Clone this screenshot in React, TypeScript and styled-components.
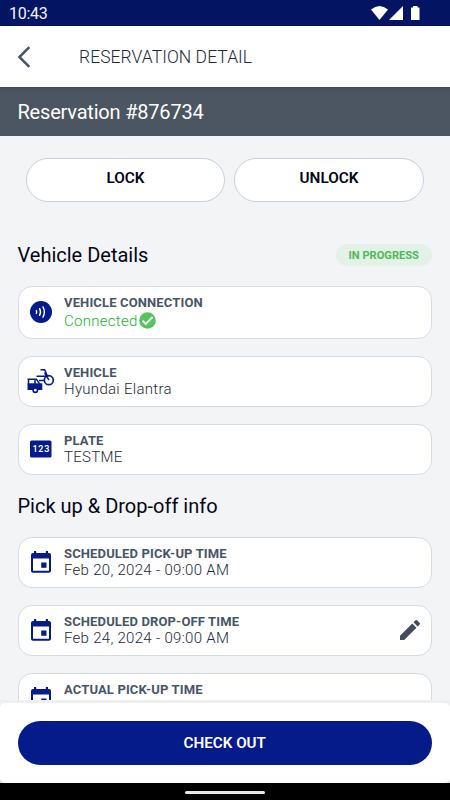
import React from "react";
import styled, { createGlobalStyle } from "styled-components";

const GlobalStyle = createGlobalStyle`
  * { box-sizing: border-box; }
  body { margin: 0; background: #f3f4f6; font-family: Roboto, "Liberation Sans", sans-serif; }
  button { font-family: inherit; }
  svg { display: block; flex: none; }
`;

const Screen = styled.div`
  width: 450px;
  height: 800px;
  display: flex;
  flex-direction: column;
  overflow: hidden;
  background: #f3f4f6;
`;

const StatusBar = styled.div`
  height: 26px;
  flex: none;
  display: flex;
  align-items: flex-start;
  justify-content: space-between;
  padding: 2px 29px 0 9px;
  background: #031463;
  color: #f1f3fb;
  font-size: 16px;
  line-height: 24px;
  letter-spacing: -0.25px;
`;

const StatusIconGroup = styled.div`
  padding-top: 3px;
`;

const Header = styled.header`
  height: 61px;
  flex: none;
  display: flex;
  align-items: center;
  gap: 48px;
  padding-left: 17px;
  background: #fff;
`;

const BackButton = styled.button`
  border: 0;
  padding: 0;
  background: none;
`;

const HeaderTitle = styled.h1`
  margin: 0;
  font-size: 17.5px;
  font-weight: 300;
  line-height: 22px;
  letter-spacing: 0.05px;
  color: #1e293b;
`;

const Banner = styled.div`
  height: 49px;
  flex: none;
  padding: 0 17.5px;
  border-top: 1px solid #414b57;
  background: linear-gradient(#47525e, #4b5662 8px);
  color: #fff;
  font-size: 20px;
  line-height: 49px;
  letter-spacing: -0.2px;
`;

const Content = styled.main`
  flex: 1;
  min-height: 0;
  overflow: hidden;
  padding: 22px 18px 0 17.5px;
`;

const LockActions = styled.div`
  display: grid;
  grid-template-columns: 199px 190px;
  gap: 9px;
  padding-left: 8.5px;
`;

const PillButton = styled.button`
  height: 44px;
  padding: 0 0 4px;
  border: 1px solid #c6d0de;
  border-radius: 22px;
  background: #fff;
  color: #020617;
  font-size: 15.3px;
  font-weight: 600;
`;

const SectionHead = styled.div<{ $top: number; $bottom: number }>`
  display: flex;
  align-items: center;
  justify-content: space-between;
  height: 22px;
  margin: ${(p) => p.$top}px 0 ${(p) => p.$bottom}px;
`;

const SectionTitle = styled.h2`
  margin: 0;
  font-size: 20px;
  font-weight: 400;
  line-height: 22px;
  color: #020617;
`;

const StatusBadge = styled.span`
  width: 96.5px;
  height: 22px;
  border-radius: 11px;
  background: #e4f1e8;
  color: #4cbb54;
  font-size: 11.1px;
  font-weight: 700;
  line-height: 23px;
  text-align: center;
`;

const CardList = styled.div`
  display: flex;
  flex-direction: column;
  gap: 17.5px;
`;

const Card = styled.section<{ $height?: number }>`
  display: flex;
  align-items: center;
  height: ${(p) => p.$height ?? 50.5}px;
  padding: 0 11px 0 8px;
  border: 1px solid #d5dce6;
  border-radius: 14px;
  background: #fff;
`;

const IconSlot = styled.div`
  width: 28px;
  margin-right: 9.5px;
  display: flex;
  justify-content: center;
`;

const CardText = styled.div`
  flex: 1;
  padding-top: 1px;
`;

const CardLabel = styled.div`
  font-size: 13px;
  font-weight: 700;
  line-height: 16px;
  letter-spacing: 0.14px;
  color: #475569;
`;

const CardValue = styled.div<{ $positive?: boolean }>`
  display: flex;
  align-items: center;
  gap: 1px;
  font-size: 15px;
  font-weight: 300;
  line-height: ${(p) => (p.$positive ? 20 : 17)}px;
  letter-spacing: 0.29px;
  color: ${(p) => (p.$positive ? "#22b530" : "#1e293b")};
`;

const EditButton = styled.button`
  border: 0;
  padding: 0;
  background: none;
`;

const FooterBackdrop = styled.div`
  flex: none;
  height: 83px;
  padding-top: 3px;
  background: linear-gradient(#efeff0 6px, #dedede);
`;

const Footer = styled.footer`
  height: 80px;
  padding: 18px 18px 0 17.5px;
  border-radius: 5px;
  background: #fff;
`;

const CheckOutButton = styled.button`
  display: block;
  width: 100%;
  height: 44px;
  padding: 0;
  border: 0;
  border-radius: 22px;
  background: #051b8a;
  color: #fff;
  font-size: 15.2px;
  font-weight: 600;
`;

const GestureBar = styled.div`
  flex: none;
  height: 17px;
  padding-top: 8px;
  background: #000;
`;

const GestureHandle = styled.div`
  width: 80px;
  height: 3px;
  margin: 0 auto;
  border-radius: 2px;
  background: #e8e8e8;
`;

const NAVY = "#051b8a";

const StatusIcons = () => (
  <svg width="50" height="16" viewBox="0 0 50 16" fill="#fff">
    <path d="M0 4.500Q8.500-2.500 17 4.500L8.500 15Z" />
    <path d="M32 1V15H18Z" />
    <path d="M40 2.500h2V1h4.500v1.500h2V15H40Z" />
  </svg>
);

const BackIcon = () => (
  <svg width="14" height="22" viewBox="0 0 14 22" fill="none" stroke="#475569" strokeWidth="2.500">
    <path d="M12.300 1.200 2.400 11l9.900 9.800" />
  </svg>
);

const ConnectionIcon = () => (
  <svg width="22" height="22" viewBox="0 0 22 22" fill="none" stroke="#fff" strokeWidth="1.400" strokeLinecap="round">
    <circle cx="11" cy="11" r="11" fill={NAVY} stroke="none" />
    <path d="M6.300 9.500q.8 1.500 0 3M9.600 7.700q1.800 3.300 0 6.600M13 5.900q2.700 5.100 0 10.200" />
  </svg>
);

const CheckIcon = () => (
  <svg width="17" height="17" viewBox="0 0 17 17" fill="none">
    <circle cx="8.500" cy="8.500" r="8.300" fill="#57c35e" />
    <path d="m3.500 8.700 3.300 3.200 6.800-6.900" stroke="#fff" strokeWidth="1.900" />
  </svg>
);

const VehicleIcon = () => (
  <svg width="28" height="26" viewBox="0 0 28 26" fill="none" stroke={NAVY}>
    <path d="M13.500 1.700h4.200l3.200 7.500M9.500 8.200h10l2.500 4M17.700 4.500l1.500 4" strokeWidth="1.500" />
    <circle cx="21.800" cy="12.200" r="4.500" strokeWidth="1.700" />
    <path d="M12 12.500h5.500" strokeWidth="1.500" />
    <path d="M.5 11.200h8.900l3.400 5M8 11.200v5M1.500 11.200v5" strokeWidth="1.500" />
    <path d="M.5 15.300h14.800v6.700H.5Z" fill={NAVY} stroke="none" />
    <circle cx="8.300" cy="22.200" r="2.200" fill="#fff" strokeWidth="1.600" />
  </svg>
);

const PlateIcon = () => (
  <svg width="22" height="18" viewBox="0 0 22 18">
    <rect y="0.500" width="21.500" height="17" rx="1.500" fill={NAVY} />
    <text x="11.300" y="12.300" fill="#fff" fontFamily="Roboto, sans-serif" fontSize="9" fontWeight="600" letterSpacing="0.8" textAnchor="middle">
      123
    </text>
  </svg>
);

const CalendarIcon = () => (
  <svg width="20" height="22" viewBox="0 0 20 22" fill={NAVY}>
    <path
      fillRule="evenodd"
      d="M3 0h2.200v2.100h9.600V0H17v2.100h1c1.100 0 2 .9 2 2v15.700c0 1.100-.9 2-2 2H2c-1.100 0-2-.9-2-2V4.100c0-1.100.9-2 2-2h1ZM2 7.500v12.200h16V7.500Z"
    />
    <path d="M10.200 11.500h5.300v5.300h-5.300Z" />
  </svg>
);

const PencilIcon = () => (
  <svg width="20" height="20" viewBox="3 3 18 18" fill="#414d5b">
    <path d="M3 17.250V21h3.750L17.810 9.940l-3.750-3.750L3 17.250zM20.710 7.040a1 1 0 0 0 0-1.410l-2.340-2.340a1 1 0 0 0-1.410 0l-1.830 1.830 3.750 3.750 1.830-1.830z" />
  </svg>
);

interface DetailCardProps {
  icon: React.ReactNode;
  label: string;
  value: string;
  connected?: boolean;
  editable?: boolean;
}

const DetailCard = ({ icon, label, value, connected, editable }: DetailCardProps) => (
  <Card $height={connected ? 52.5 : 50.5}>
    <IconSlot>{icon}</IconSlot>
    <CardText>
      <CardLabel>{label}</CardLabel>
      <CardValue $positive={connected}>
        {value}
        {connected && <CheckIcon />}
      </CardValue>
    </CardText>
    {editable && (
      <EditButton aria-label="Edit">
        <PencilIcon />
      </EditButton>
    )}
  </Card>
);

export default function App() {
  return (
    <>
      <GlobalStyle />
      <Screen>
        <StatusBar>
          <span>10:43</span>
          <StatusIconGroup>
            <StatusIcons />
          </StatusIconGroup>
        </StatusBar>
        <Header>
          <BackButton aria-label="Back">
            <BackIcon />
          </BackButton>
          <HeaderTitle>RESERVATION DETAIL</HeaderTitle>
        </Header>
        <Banner>Reservation #876734</Banner>
        <Content>
          <LockActions>
            <PillButton>LOCK</PillButton>
            <PillButton>UNLOCK</PillButton>
          </LockActions>
          <SectionHead $top={42} $bottom={20}>
            <SectionTitle>Vehicle Details</SectionTitle>
            <StatusBadge>IN PROGRESS</StatusBadge>
          </SectionHead>
          <CardList>
            <DetailCard icon={<ConnectionIcon />} label="VEHICLE CONNECTION" value="Connected" connected />
            <DetailCard icon={<VehicleIcon />} label="VEHICLE" value="Hyundai Elantra" />
            <DetailCard icon={<PlateIcon />} label="PLATE" value="TESTME" />
          </CardList>
          <SectionHead $top={20.5} $bottom={20}>
            <SectionTitle>Pick up &amp; Drop-off info</SectionTitle>
          </SectionHead>
          <CardList>
            <DetailCard icon={<CalendarIcon />} label="SCHEDULED PICK-UP TIME" value="Feb 20, 2024 - 09:00 AM" />
            <DetailCard icon={<CalendarIcon />} label="SCHEDULED DROP-OFF TIME" value="Feb 24, 2024 - 09:00 AM" editable />
            <DetailCard icon={<CalendarIcon />} label="ACTUAL PICK-UP TIME" value="Feb 20, 2024 - 09:00 AM" />
          </CardList>
        </Content>
        <FooterBackdrop>
          <Footer>
            <CheckOutButton>CHECK OUT</CheckOutButton>
          </Footer>
        </FooterBackdrop>
        <GestureBar>
          <GestureHandle />
        </GestureBar>
      </Screen>
    </>
  );
}
